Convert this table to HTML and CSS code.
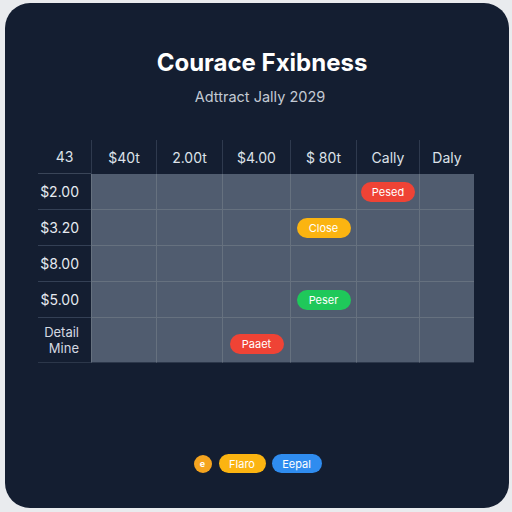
FILE: index.html
```
<!DOCTYPE html>
<html>
<head>
<meta charset="utf-8">
<link rel="stylesheet" href="styles.css">
</head>
<body>
<div class="card">
  <h1 class="title">Courace Fxibness</h1>
  <p class="subtitle">Adttract Jally 2029</p>
  <div class="table">
    <div class="hd first">43</div>
    <div class="hd">$40t</div>
    <div class="hd">2.00t</div>
    <div class="hd">$4.00</div>
    <div class="hd">$ 80t</div>
    <div class="hd">Cally</div>
    <div class="hd">Daly</div>

    <div class="lbl">$2.00</div>
    <div class="cell"></div><div class="cell"></div><div class="cell"></div><div class="cell"></div>
    <div class="cell"><span class="badge red">Pesed</span></div>
    <div class="cell"></div>

    <div class="lbl">$3.20</div>
    <div class="cell"></div><div class="cell"></div><div class="cell"></div>
    <div class="cell"><span class="badge yellow">Close</span></div>
    <div class="cell"></div><div class="cell"></div>

    <div class="lbl">$8.00</div>
    <div class="cell"></div><div class="cell"></div><div class="cell"></div><div class="cell"></div><div class="cell"></div><div class="cell"></div>

    <div class="lbl">$5.00</div>
    <div class="cell"></div><div class="cell"></div><div class="cell"></div>
    <div class="cell"><span class="badge green">Peser</span></div>
    <div class="cell"></div><div class="cell"></div>

    <div class="lbl two">Detail<br>Mine</div>
    <div class="cell last"></div><div class="cell last"></div>
    <div class="cell last"><span class="badge red low">Paaet</span></div>
    <div class="cell last"></div><div class="cell last"></div><div class="cell last"></div>
  </div>
  <div class="legend">
    <span class="dot">e</span>
    <span class="pill yellow wide1">Flaro</span>
    <span class="pill blue wide2">Eepal</span>
  </div>
</div>
</body>
</html>
```
FILE: styles.css
```
html, body {
  margin: 0;
  padding: 0;
  background: #e9ebee;
}
body {
  width: 512px;
  height: 512px;
  padding: 3px 3px 4px 5px;
  box-sizing: border-box;
  font-family: Inter, "Liberation Sans", Arial, sans-serif;
}
.card {
  width: 504px;
  height: 505px;
  background: #141e31;
  border-radius: 25px;
  display: flex;
  flex-direction: column;
  align-items: center;
  padding-top: 46px;
  padding-bottom: 35px;
  box-sizing: border-box;
}
.title {
  margin: 0 0 0 10px;
  font-size: 24px;
  line-height: 28px;
  font-weight: 700;
  color: #ffffff;
}
.subtitle {
  margin: 11px 0 0 6px;
  font-size: 14.5px;
  line-height: 18px;
  color: #c3cad4;
}
.table {
  margin-top: 34px;
  display: grid;
  grid-template-columns: 53px 65px 66px 68px 66px 63px 55px;
  grid-template-rows: 34px 36px 36px 36px 36px 45px;
  margin-left: -2px;
}
.hd {
  display: flex;
  align-items: center;
  justify-content: center;
  font-size: 14px;
  color: #dde2e9;
  border-left: 1px solid #2f3a4e;
  box-sizing: border-box;
}
.hd.first {
  border-left: none;
  border-bottom: 1px solid #3a4558;
}
.lbl {
  display: flex;
  align-items: center;
  justify-content: flex-end;
  text-align: right;
  padding-right: 12px;
  font-size: 14px;
  color: #e6eaf0;
  border-bottom: 1px solid #344055;
  box-sizing: border-box;
}
.lbl.two {
  font-size: 13px;
  line-height: 16px;
  color: #d4d9e1;
  border-bottom-color: #2c374a;
}
.cell {
  background: #505c6f;
  border-left: 1px solid #66717f;
  border-bottom: 1px solid #66717f;
  box-sizing: border-box;
  display: flex;
  align-items: center;
  justify-content: center;
}
.cell.last {
  border-bottom: 1px solid #2c374a;
}
.badge {
  width: 54px;
  height: 20px;
  border-radius: 10px;
  display: flex;
  align-items: center;
  justify-content: center;
  font-size: 11px;
  color: #ffffff;
}
.badge.low {
  margin-top: 7px;
}
.red { background: #ef4335; }
.yellow { background: #fbb411; }
.green { background: #1fc85a; }
.blue { background: #2f8cef; }
.legend {
  margin-top: auto;
  display: flex;
  align-items: center;
  gap: 6px;
  margin-left: 1px;
}
.dot {
  width: 18px;
  height: 18px;
  border-radius: 50%;
  background: #f5a41f;
  color: #ffffff;
  font-size: 9px;
  font-weight: 700;
  display: flex;
  align-items: center;
  justify-content: center;
  margin-right: 1px;
}
.pill {
  height: 19px;
  border-radius: 10px;
  display: flex;
  align-items: center;
  justify-content: center;
  font-size: 11px;
  color: #ffffff;
}
.wide1 { width: 47px; }
.wide2 { width: 50px; }
```
